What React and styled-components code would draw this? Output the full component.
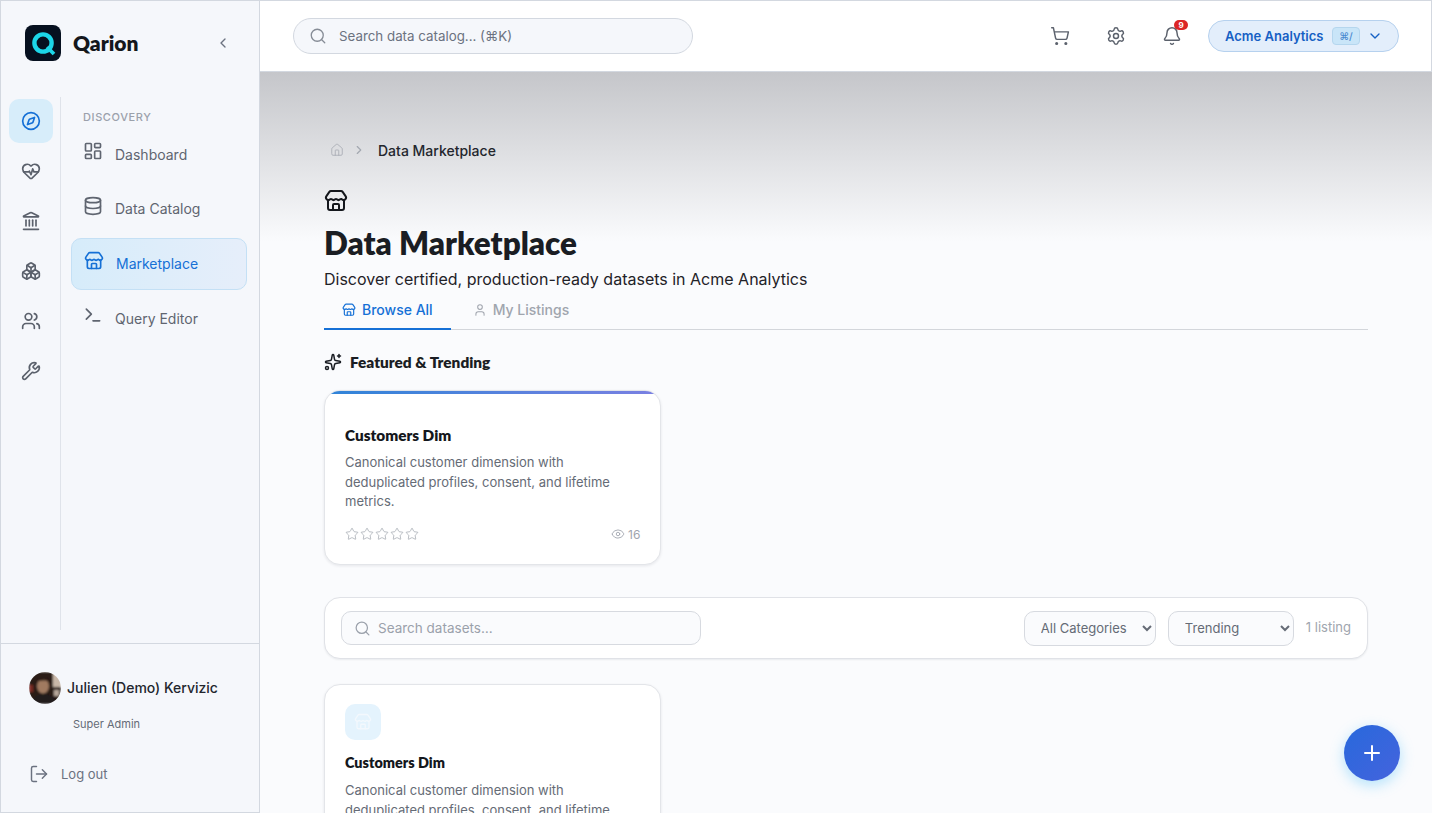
import React from 'react';
import styled, { createGlobalStyle } from 'styled-components';
import {
  Bell,
  Boxes,
  ChevronDown,
  ChevronLeft,
  ChevronRight,
  Compass,
  Database,
  Eye,
  HeartPulse,
  House,
  Landmark,
  LayoutDashboard,
  LogOut,
  Plus,
  Search,
  Settings,
  ShoppingCart,
  Sparkles,
  Star,
  Store,
  Terminal,
  User,
  Users,
  Wrench,
} from 'lucide-react';

const HEADING = '"Lato", "Open Sans", sans-serif';

const GlobalStyle = createGlobalStyle`
  * { box-sizing: border-box; }
  html, body { margin: 0; height: 100%; overflow: hidden; }
  body {
    font-family: "Inter", "Liberation Sans", sans-serif;
    color: #1a1d23;
    background: #fafbfd;
  }
  #root { height: 100%; }
`;

const Shell = styled.div`
  display: flex;
  height: 813px;
  overflow: hidden;
`;

const Sidebar = styled.aside`
  flex: 0 0 260px;
  display: flex;
  flex-direction: column;
  background: #f5f7fb;
  border: 1px solid #d3d8e0;
`;

const Brand = styled.div`
  flex: 0 0 95px;
  display: flex;
  align-items: center;
  padding: 0 28px 12px 24px;
`;

const BrandName = styled.span`
  margin-left: 12px;
  font-family: ${HEADING};
  font-size: 21px;
  font-weight: 800;
  color: #14171c;
  flex: 1;
`;

const CollapseButton = styled.span`
  display: flex;
  color: #6b7280;
`;

const SideBody = styled.div`
  flex: 1;
  display: flex;
  min-height: 0;
`;

const Rail = styled.nav`
  flex: 0 0 60px;
  margin: 1px 0 13px;
  padding: 2px 0 0 8px;
  border-right: 1px solid #dfe3ea;
  display: flex;
  flex-direction: column;
  gap: 6px;
`;

const RailButton = styled.span`
  width: 44px;
  height: 44px;
  display: flex;
  align-items: center;
  justify-content: center;
  border-radius: 10px;
  color: ${p => (p.$active ? '#1570d6' : '#5b616c')};
  background: ${p => (p.$active ? '#d7edfa' : 'transparent')};
`;

const NavPanel = styled.nav`
  flex: 1;
  padding: 15px 12px 0 10px;
`;

const NavHeading = styled.div`
  padding-left: 12px;
  font-size: 11px;
  line-height: 13px;
  font-weight: 500;
  letter-spacing: 0.6px;
  color: #9ba1ab;
  margin-bottom: 4.1px;
`;

const NavItem = styled.a`
  height: 52px;
  margin-bottom: 2.8px;
  display: flex;
  align-items: center;
  gap: 12px;
  padding: 0 12px 0 ${p => (p.$active ? '13px' : '12px')};
  border-radius: 10px;
  border: 1px solid ${p => (p.$active ? '#c4e0f5' : 'transparent')};
  background: ${p => (p.$active ? 'linear-gradient(90deg, #d6ecfa, #e6eefa)' : 'transparent')};
  color: ${p => (p.$active ? '#1570d6' : '#5f6570')};
  font-size: 14px;
  svg { margin: -6px 0 0 -1px; }
`;

const SideFooter = styled.div`
  flex: 0 0 169px;
  border-top: 1px solid #d3d8e0;
  padding: 28px 28px 0;
`;

const UserRow = styled.div`
  display: flex;
  align-items: center;
  gap: 6px;
  font-size: 14px;
  font-weight: 500;
  color: #23262d;
`;

const UserName = styled.span`
  margin-top: -2px;
`;

const Role = styled.div`
  margin: 13px 0 0 44px;
  font-size: 11px;
  line-height: 14px;
  color: #656b76;
`;

const LogoutRow = styled.div`
  margin-top: 33px;
  display: flex;
  align-items: center;
  gap: 12px;
  font-size: 13px;
  color: #6b7280;
`;

const Main = styled.div`
  flex: 1;
  min-width: 0;
  display: flex;
  flex-direction: column;
`;

const TopBar = styled.header`
  flex: 0 0 72px;
  display: flex;
  align-items: center;
  padding: 0 32px 0 33px;
  background: #fff;
  border-top: 1px solid #d3d8e0;
  border-bottom: 1px solid #d3d8e0;
  border-right: 1px solid #d3d8e0;
`;

const GlobalSearch = styled.div`
  width: 400px;
  height: 36px;
  display: flex;
  align-items: center;
  gap: 12px;
  padding: 0 15px;
  border-radius: 18px;
  background: #f5f7fb;
  border: 1px solid #d3d8e0;
  color: #6b7280;
  font-size: 13.33px;
  svg { color: #868c96; }
`;

const TopActions = styled.div`
  margin-left: auto;
  display: flex;
  align-items: center;
`;

const IconButton = styled.span`
  position: relative;
  width: 56px;
  display: flex;
  justify-content: center;
  color: #5b616c;
`;

const Badge = styled.span`
  position: absolute;
  top: -6px;
  left: 30px;
  width: 14px;
  height: 10px;
  border-radius: 5px;
  background: #dc2626;
  color: #fff;
  font-size: 8px;
  line-height: 10px;
  font-weight: 700;
  text-align: center;
`;

const OrgButton = styled.div`
  width: 191px;
  height: 32px;
  margin-left: 8px;
  display: flex;
  align-items: center;
  padding: 0 15px 0 16px;
  border-radius: 16px;
  background: #e3eefb;
  border: 1px solid #b6d1ee;
  color: #1560c4;
  font-size: 13px;
  font-weight: 600;
  white-space: nowrap;
`;

const Kbd = styled.span`
  margin: 0 7px 0 auto;
  width: 28px;
  height: 18px;
  border-radius: 4px;
  background: #c9e5f8;
  border: 1px solid #b5d6ee;
  color: #4a8ad0;
  font-size: 10px;
  line-height: 16px;
  font-weight: 500;
  text-align: center;
`;

const Content = styled.main`
  flex: 1;
  min-height: 0;
  overflow: hidden;
  padding: 69px 64px 0 64px;
  background: linear-gradient(180deg, #c5c6ca 0, #fafbfd 170px);
`;

const Breadcrumb = styled.div`
  display: flex;
  align-items: center;
  gap: 8px;
  height: 18px;
  font-size: 14px;
  font-weight: 500;
  color: #23262d;
  padding-left: 6px;
`;

const Crumb = styled.span`
  display: flex;
  color: ${p => (p.$sep ? '#a3a8b0' : '#a9adb5')};
  margin-right: ${p => (p.$sep ? '4px' : '0')};
`;

const PageIcon = styled.div`
  display: flex;
  margin: 30px 0 11px;
  color: #14171c;
`;

const PageTitle = styled.h1`
  margin: 0;
  font-family: ${HEADING};
  font-size: 31.4px;
  line-height: 38px;
  font-weight: 800;
  color: #1a1d23;
`;

const PageSubtitle = styled.p`
  margin: 7px 0 0;
  font-size: 16px;
  line-height: 20px;
  color: #1f2228;
`;

const Tabs = styled.div`
  display: flex;
  gap: 4px;
  margin-top: 8px;
  height: 33px;
  border-bottom: 1px solid #d3d6db;
`;

const Tab = styled.span`
  display: flex;
  align-items: center;
  gap: 6px;
  height: 33px;
  padding: 0 18px 6px;
  font-size: 14px;
  font-weight: 500;
  color: ${p => (p.$active ? '#1570d6' : '#a0a5ae')};
  border-bottom: 2px solid ${p => (p.$active ? '#1570d6' : 'transparent')};
`;

const SectionHead = styled.h2`
  margin: 21px 0 17px;
  display: flex;
  align-items: center;
  gap: 8px;
  font-family: ${HEADING};
  font-size: 15.4px;
  line-height: 22px;
  font-weight: 800;
  color: #1a1d23;
`;

const CardGrid = styled.div`
  display: grid;
  grid-template-columns: repeat(3, 1fr);
  gap: 16px;
`;

const Card = styled.article`
  position: relative;
  overflow: hidden;
  padding: ${p => (p.$featured ? '34px' : '19px')} 20px 20px;
  min-height: ${p => (p.$featured ? '175px' : '0')};
  background: #fff;
  border: 1px solid #e3e5e9;
  border-radius: 16px;
  box-shadow: 0 1px 3px rgba(20, 25, 40, 0.09);
`;

const CardStripe = styled.span`
  position: absolute;
  top: 0;
  left: 0;
  right: 0;
  height: 3px;
  background: linear-gradient(90deg, #2f84d8, #7a80e2);
`;

const CardIcon = styled.div`
  width: 36px;
  height: 36px;
  margin-bottom: 13px;
  display: flex;
  align-items: center;
  justify-content: center;
  border-radius: 10px;
  background: #e4f3fd;
  color: #f3f8fd;
`;

const CardTitle = styled.h3`
  margin: 0;
  font-family: ${HEADING};
  font-size: ${p => (p.$small ? '14.4px' : '15.3px')};
  line-height: 20px;
  font-weight: 800;
  color: #14171c;
`;

const CardText = styled.p`
  margin: 8px 0 0;
  font-size: 13px;
  line-height: 19.5px;
  color: #656b76;
`;

const CardFooter = styled.div`
  margin-top: 15px;
  display: flex;
  align-items: center;
  justify-content: space-between;
`;

const Stars = styled.span`
  display: flex;
  gap: 1px;
  color: #a0a5ae;
`;

const Views = styled.span`
  display: flex;
  align-items: center;
  gap: 3px;
  font-size: 12px;
  color: #a0a5ae;
`;

const FilterBar = styled.div`
  margin: 32px 0 25px;
  height: 62px;
  display: flex;
  align-items: center;
  gap: 12px;
  padding: 0 16px;
  background: #fff;
  border: 1px solid #e0e2e7;
  border-radius: 16px;
  box-shadow: 0 1px 2px rgba(20, 25, 40, 0.07);
`;

const FilterSearch = styled.div`
  width: 360px;
  height: 34px;
  margin-right: auto;
  display: flex;
  align-items: center;
  gap: 7px;
  padding: 0 12px;
  background: #fafbfd;
  border: 1px solid #d7dae0;
  border-radius: 10px;
  color: #9ba1ab;
  font-size: 13.5px;
`;

const FilterSelect = styled.select`
  width: ${p => p.$width}px;
  height: 35px;
  padding: 0 4px 0 12px;
  background: #fafbfd;
  border: 1px solid #d7dae0;
  border-radius: 10px;
  color: #656b76;
  font: 13px "Inter", sans-serif;
`;

const ListingCount = styled.span`
  font-size: 13px;
  color: #a0a5ae;
  margin-top: -2px;
`;

const Fab = styled.button`
  position: fixed;
  left: 1344px;
  top: 725px;
  width: 56px;
  height: 56px;
  padding: 0;
  display: flex;
  align-items: center;
  justify-content: center;
  border: 0;
  border-radius: 50%;
  color: #fff;
  background: linear-gradient(135deg, #2869dc, #4463dd);
  box-shadow: 0 4px 14px rgba(70, 190, 250, 0.4);
`;

function QarionLogo() {
  return (
    <svg width="36" height="36" viewBox="0 0 36 36">
      <rect width="36" height="36" rx="8" fill="#06101f" />
      <circle cx="18" cy="18" r="8.6" fill="none" stroke="#1cd6e8" strokeWidth="4.4" />
      <path d="M22 22l7 7" stroke="#1cd6e8" strokeWidth="3.8" />
    </svg>
  );
}

function Avatar() {
  return (
    <svg width="32" height="32" viewBox="0 0 32 32">
      <defs>
        <clipPath id="avatarClip">
          <circle cx="16" cy="16" r="16" />
        </clipPath>
        <filter id="avatarBlur">
          <feGaussianBlur stdDeviation="0.9" />
        </filter>
      </defs>
      <g clipPath="url(#avatarClip)">
        <g filter="url(#avatarBlur)">
          <rect width="32" height="32" fill="#2a1a18" />
          <rect x="24" y="1" width="8" height="14" fill="#c9b8a8" />
          <rect x="0" y="13" width="4" height="7" fill="#7a2a22" />
          <ellipse cx="14" cy="14" rx="6" ry="7.5" fill="#a07a60" />
          <path d="M7 10c1-6 13-7 14 0-4-2-9-2-14 0z" fill="#2b1a14" />
          <path d="M3 32c1-8 7-10 11-10s12 2 14 10z" fill="#231a1e" />
          <rect x="25" y="18" width="5" height="6" fill="#b8a79b" />
        </g>
      </g>
    </svg>
  );
}

const railIcons = [Compass, HeartPulse, Landmark, Boxes, Users, Wrench];

const navItems = [
  { label: 'Dashboard', icon: LayoutDashboard },
  { label: 'Data Catalog', icon: Database },
  { label: 'Marketplace', icon: Store, active: true },
  { label: 'Query Editor', icon: Terminal },
];

const description = 'Canonical customer dimension with deduplicated profiles, consent, and lifetime metrics.';

export default function App() {
  return (
    <Shell>
      <GlobalStyle />
      <Sidebar>
        <Brand>
          <QarionLogo />
          <BrandName>Qarion</BrandName>
          <CollapseButton>
            <ChevronLeft size={16} />
          </CollapseButton>
        </Brand>
        <SideBody>
          <Rail>
            {railIcons.map((Icon, i) => (
              <RailButton key={i} $active={i === 0}>
                <Icon size={20} strokeWidth={2} />
              </RailButton>
            ))}
          </Rail>
          <NavPanel>
            <NavHeading>DISCOVERY</NavHeading>
            {navItems.map(({ label, icon: Icon, active }) => (
              <NavItem key={label} $active={active}>
                <Icon size={20} strokeWidth={2} />
                {label}
              </NavItem>
            ))}
          </NavPanel>
        </SideBody>
        <SideFooter>
          <UserRow>
            <Avatar />
            <UserName>Julien (Demo) Kervizic</UserName>
          </UserRow>
          <Role>Super Admin</Role>
          <LogoutRow>
            <LogOut size={20} strokeWidth={1.75} />
            Log out
          </LogoutRow>
        </SideFooter>
      </Sidebar>
      <Main>
        <TopBar>
          <GlobalSearch>
            <Search size={18} strokeWidth={1.75} />
            Search data catalog... (⌘K)
          </GlobalSearch>
          <TopActions>
            <IconButton>
              <ShoppingCart size={20} strokeWidth={1.75} />
            </IconButton>
            <IconButton>
              <Settings size={20} strokeWidth={1.75} />
            </IconButton>
            <IconButton>
              <Bell size={20} strokeWidth={1.75} />
              <Badge>9</Badge>
            </IconButton>
            <OrgButton>
              Acme Analytics
              <Kbd>⌘/</Kbd>
              <ChevronDown size={16} />
            </OrgButton>
          </TopActions>
        </TopBar>
        <Content>
          <Breadcrumb>
            <Crumb>
              <House size={14} strokeWidth={1.5} />
            </Crumb>
            <Crumb $sep>
              <ChevronRight size={14} />
            </Crumb>
            Data Marketplace
          </Breadcrumb>
          <PageIcon>
            <Store size={24} strokeWidth={2} />
          </PageIcon>
          <PageTitle>Data Marketplace</PageTitle>
          <PageSubtitle>Discover certified, production-ready datasets in Acme Analytics</PageSubtitle>
          <Tabs>
            <Tab $active>
              <Store size={14} strokeWidth={2} />
              Browse All
            </Tab>
            <Tab>
              <User size={14} strokeWidth={1.75} />
              My Listings
            </Tab>
          </Tabs>
          <SectionHead>
            <Sparkles size={18} strokeWidth={2} />
            Featured &amp; Trending
          </SectionHead>
          <CardGrid>
            <Card $featured>
              <CardStripe />
              <CardTitle>Customers Dim</CardTitle>
              <CardText>{description}</CardText>
              <CardFooter>
                <Stars>
                  {[0, 1, 2, 3, 4].map(n => (
                    <Star key={n} size={14} strokeWidth={1.25} />
                  ))}
                </Stars>
                <Views>
                  <Eye size={14} strokeWidth={1.5} />
                  16
                </Views>
              </CardFooter>
            </Card>
          </CardGrid>
          <FilterBar>
            <FilterSearch>
              <Search size={17} strokeWidth={1.75} />
              Search datasets…
            </FilterSearch>
            <FilterSelect $width={132} defaultValue="all">
              <option value="all">All Categories</option>
            </FilterSelect>
            <FilterSelect $width={126} defaultValue="trending">
              <option value="trending">Trending</option>
            </FilterSelect>
            <ListingCount>1 listing</ListingCount>
          </FilterBar>
          <CardGrid>
            <Card>
              <CardIcon>
                <Store size={18} strokeWidth={1.75} />
              </CardIcon>
              <CardTitle $small>Customers Dim</CardTitle>
              <CardText>{description}</CardText>
            </Card>
          </CardGrid>
        </Content>
      </Main>
      <Fab>
        <Plus size={24} strokeWidth={2} />
      </Fab>
    </Shell>
  );
}
